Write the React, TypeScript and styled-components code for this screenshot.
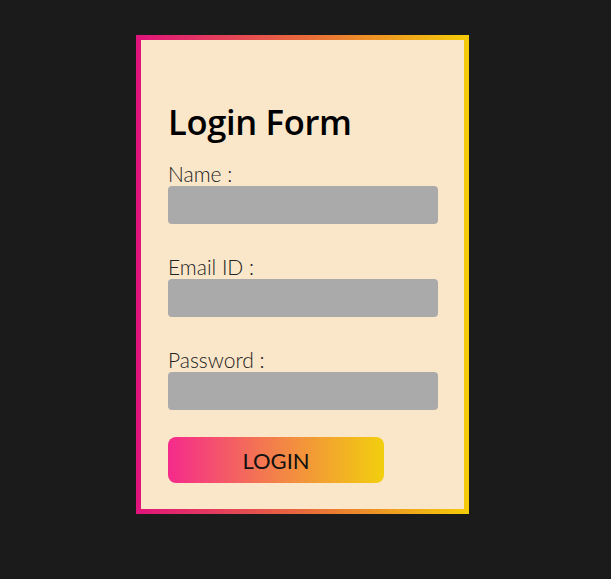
import React from "react";
import styled, { createGlobalStyle } from "styled-components";

const GlobalStyle = createGlobalStyle`
  body {
    margin: 0;
    background: #1b1b1b;
    font-family: Lato, "Open Sans", sans-serif;
  }
`;

const Page = styled.div`
  min-height: 579px;
  padding: 35px 0 0 136px;
  box-sizing: border-box;
`;

const Frame = styled.div`
  width: 333px;
  height: 479px;
  padding: 5px;
  box-sizing: border-box;
  background: linear-gradient(90deg, #e0137c, #e86a3c 50%, #f5cc08);
`;

const Card = styled.form`
  height: 100%;
  background: #fae6c9;
  padding: 60px 26px 0 27px;
  box-sizing: border-box;
  display: flex;
  flex-direction: column;
`;

const Title = styled.h1`
  margin: 0 0 17px;
  font-family: "Open Sans", Lato, sans-serif;
  font-size: 34.5px;
  font-weight: 600;
  letter-spacing: -0.3px;
  color: #000;
  line-height: 44px;
`;

const Field = styled.div`
  display: flex;
  flex-direction: column;
  margin-bottom: 30px;
`;

const Label = styled.label`
  font-size: 21px;
  font-weight: 300;
  color: #222;
  line-height: 26px;
  height: 25px;
`;

const Input = styled.input`
  width: 270px;
  height: 38px;
  border: none;
  border-radius: 4px;
  background: #aaaaaa;
  box-sizing: border-box;
  outline: none;
`;

const Button = styled.button`
  margin-top: -3px;
  width: 216px;
  height: 46px;
  border: none;
  border-radius: 8px;
  background: linear-gradient(90deg, #f52a8c, #f3794f 45%, #f2cf0e);
  font-family: Lato, "Open Sans", sans-serif;
  font-size: 22px;
  font-weight: 400;
  color: #111;
  cursor: pointer;
`;

const fields = ["Name :", "Email ID :", "Password :"];

export default function App() {
  return (
    <Page>
      <GlobalStyle />
      <Frame>
        <Card onSubmit={(e) => e.preventDefault()}>
          <Title>Login Form</Title>
          {fields.map((f) => (
            <Field key={f}>
              <Label>{f}</Label>
              <Input type={f.startsWith("Password") ? "password" : "text"} />
            </Field>
          ))}
          <Button type="submit">LOGIN</Button>
        </Card>
      </Frame>
    </Page>
  );
}
